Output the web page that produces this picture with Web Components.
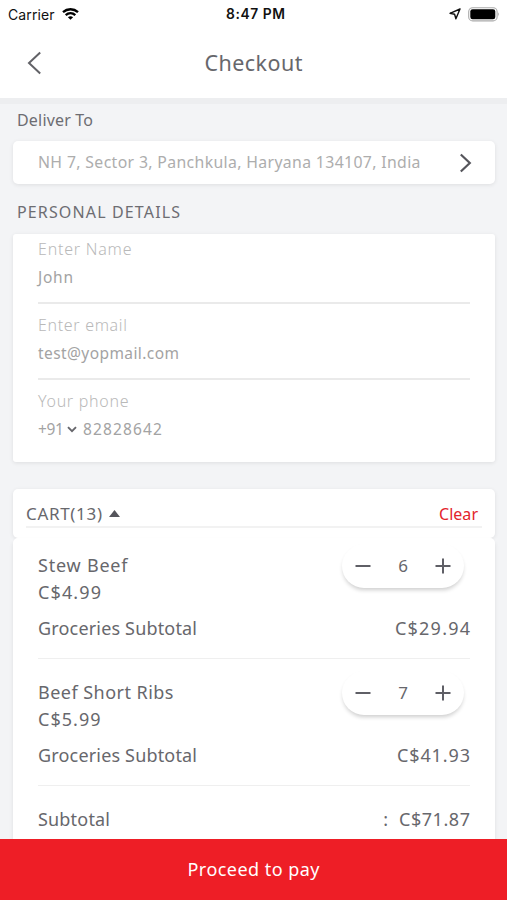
<!DOCTYPE html>
<html lang="en">
<head>
<meta charset="utf-8">
<meta name="viewport" content="width=device-width, initial-scale=1">
<title>Checkout</title>
<style>
html,body{margin:0;height:100%}
body{font-family:"Noto Sans","Open Sans",sans-serif;color:#67676c;background:#f3f4f6;overflow:hidden}
</style>
</head>
<body>
<checkout-page></checkout-page>
<script>
const define = (name, html, setup) => {
  const t = document.createElement('template');
  t.innerHTML = html;
  customElements.define(name, class extends HTMLElement {
    constructor() {
      super();
      this.attachShadow({ mode: 'open' }).append(t.content.cloneNode(true));
    }
    connectedCallback() { if (setup) setup(this, this.shadowRoot); }
  });
};

/* One line of text, tracked so that it spans the width given in "w". */
define('track-text', `<style>
:host{display:block;flex:none;white-space:pre;font-size:var(--fs,18px)}
span{display:inline-block;line-height:inherit}
</style><span></span>`, (el, root) => {
  const s = root.querySelector('span');
  s.textContent = el.getAttribute('text');
  const w = parseFloat(el.getAttribute('w'));
  const n = s.textContent.length;
  if (w && n > 1) {
    const gap = (w - s.getBoundingClientRect().width) / (n - 1);
    s.style.letterSpacing = gap.toFixed(3) + 'px';
    s.style.marginRight = (-gap).toFixed(3) + 'px';
  }
});

define('status-bar', `<style>
:host{display:grid;grid-template-columns:1fr auto 1fr;align-items:center;height:28px;box-sizing:border-box;padding:0 7px 0 8px;color:#111;font-family:Inter,"Liberation Sans",sans-serif}
.l,.r{display:flex;align-items:center}.l{gap:7px}.r{justify-content:flex-end;gap:7px}
track-text{--fs:14px;line-height:27px}.t{font-weight:600;--fs:13.8px;margin-left:3px}
svg{display:block}
</style>
<div class="l"><track-text text="Carrier" w="46.5"></track-text>
<svg width="17" height="12" viewBox="0 0 17 12" fill="none" stroke="#000" stroke-width="2.4"><path d="M1 4.1C5.3.3 11.7.3 16 4.1"/><path d="M3.7 7.1C6.5 4.7 10.5 4.7 13.3 7.1"/><path d="M8.5 11.8 5.9 9.2C7.4 8 9.6 8 11.1 9.2Z" fill="#000" stroke="none"/></svg></div>
<track-text class="t" text="8:47 PM" w="59"></track-text>
<div class="r"><svg width="12" height="12" viewBox="0 0 12 12" fill="none" stroke="#111" stroke-width="1.4" stroke-linejoin="round"><path d="M11 1 1 5.3 5.6 6.3 6.9 10.8Z"/></svg>
<svg width="32" height="15" viewBox="0 0 32 15"><rect x=".7" y=".7" width="28.4" height="13.2" rx="4" fill="#fff" stroke="#aaa" stroke-width="1.1"/><rect x="2.3" y="2.3" width="25" height="10" rx="2.3" fill="#000"/><path d="M30.2 5.2Q32 7.3 30.2 9.4Z" fill="#999"/></svg></div>`);

define('page-header', `<style>
:host{display:grid;grid-template-columns:1fr auto 1fr;align-items:center;height:69px;padding:0 27px}
track-text{--fs:21.5px;line-height:70px}
svg{display:block}
</style>
<svg width="16" height="24" viewBox="0 0 16 24" fill="none" stroke="#626267" stroke-width="2"><path d="M13.2 1.5 2 12 13.2 22.5"/></svg>
<track-text text="Checkout" w="98"></track-text><span></span>`);

define('section-title', `<style>
:host{display:flex;align-items:flex-start;padding:0 17px;line-height:22px;--fs:16px;color:#6d6d72}
</style><slot></slot>`);

define('panel-card', `<style>
:host{display:block;box-sizing:border-box;margin:0 12px 0 13px;background:#fff;border-radius:5px;box-shadow:0 1px 4px rgba(0,0,0,.09)}
</style><slot></slot>`);

define('address-row', `<style>
:host{display:flex;align-items:center;justify-content:space-between;height:43px;padding:0 23px 0 25px;line-height:41px;--fs:15.8px;color:#adadad}
svg{display:block}
</style><track-text text="NH 7, Sector 3, Panchkula, Haryana 134107, India" w="382.5"></track-text>
<svg width="13" height="20" viewBox="0 0 13 20" fill="none" stroke="#55555b" stroke-width="2.2"><path d="M1.8 1.5 10.8 10 1.8 18.5"/></svg>`);

define('form-field', `<style>
:host{display:flex;flex-direction:column;height:76px;box-sizing:border-box;margin:0 25px;border-bottom:2px solid #eaeaea;line-height:28px;--fs:16px}
:host([last]){border:0}
.label{color:#b9b9b9;font-weight:300}
.value{display:flex;align-items:center;color:#a3a3a3;--fs:15.5px;line-height:29px}
</style><div class="label"><slot name="label"></slot></div><div class="value"><slot></slot></div>`);

define('cart-head', `<style>
:host{display:flex;align-items:center;height:49px;box-sizing:border-box;padding:0 17px 0 13px;line-height:46px;--fs:17px;background:linear-gradient(#f2f2f2,#f2f2f2) 13px 37px/calc(100% - 26px) 2px no-repeat}
.c{color:#e3242b;margin-left:auto;--fs:16px}
svg{display:block;margin:0 0 1px 7px}
</style><track-text text="CART(13)" w="76"></track-text>
<svg width="11" height="7" viewBox="0 0 11 7"><path d="M5.5 0 11 7H0Z" fill="#55555b"/></svg>
<track-text class="c" text="Clear" w="39"></track-text>`);

define('qty-stepper', `<style>
:host{display:flex;justify-content:space-between;align-items:center;width:122px;height:44px;box-sizing:border-box;padding:0 13px;border-radius:22px;background:#fff;box-shadow:0 3px 4px -1px rgba(0,0,0,.2);line-height:42px;--fs:17px}
svg{display:block}
</style>
<svg width="16" height="16" viewBox="0 0 16 16" stroke="#5f5f66" stroke-width="2"><path d="M.5 8H15.5"/></svg>
<slot></slot>
<svg width="16" height="16" viewBox="0 0 16 16" stroke="#5f5f66" stroke-width="2"><path d="M.5 8H15.5M8 .5V15.5"/></svg>`);

define('cart-item', `<style>
:host{display:block;height:127px;box-sizing:border-box;margin:0 25px;border-bottom:1px solid #efefef;padding-top:20px}
:host([first]){height:121px;padding-top:14px}
.top{display:flex;justify-content:space-between;height:53px}
.name{line-height:27px}
qty-stepper{margin:-8px 6px 0 0}
.sum{display:flex;justify-content:space-between;line-height:46px}
</style>
<div class="top"><div class="name"><slot name="name"></slot><slot name="price"></slot></div><qty-stepper><slot name="qty"></slot></qty-stepper></div>
<div class="sum"><track-text text="Groceries Subtotal" w="159"></track-text><slot name="sum"></slot></div>`);

define('total-row', `<style>
:host{display:flex;align-items:center;gap:11px;margin:0 25px;height:66px;line-height:66px}
.a{margin-right:auto}
</style><track-text class="a" text="Subtotal" w="72"></track-text><track-text text=":"></track-text><track-text text="C$71.87" w="71"></track-text>`);

define('pay-bar', `<style>
:host{display:flex;justify-content:center;height:61px;background:#ee1e26;color:#fff;line-height:60px;--fs:18px}
</style><slot></slot>`);

define('checkout-page', `<style>
:host{display:flex;flex-direction:column;height:900px;overflow:hidden}
.top{background:#fff;height:98px;flex:none}
main{flex:1;min-height:0;overflow:hidden;box-shadow:inset 0 6px 0 #edeef0}
.t1{padding-top:11px;height:32px}.t2{height:33px;padding-top:17px}
.form{height:228px;padding-top:1px;border-radius:3px;margin-bottom:27px}
.body{height:340px;border-radius:5px 5px 0 0;box-shadow:0 3px 4px rgba(0,0,0,.09)}
pay-bar{flex:none}
svg{display:block;margin:0 6px 0 3px}
</style>
<div class="top"><status-bar></status-bar><page-header></page-header></div>
<main>
<section-title class="t1"><track-text text="Deliver To" w="76"></track-text></section-title>
<panel-card><address-row></address-row></panel-card>
<section-title class="t2"><track-text text="PERSONAL DETAILS" w="163"></track-text></section-title>
<panel-card class="form">
<form-field style="height:69px"><track-text slot="label" text="Enter Name" w="93.5"></track-text><track-text text="John" w="35"></track-text></form-field>
<form-field style="padding-top:7px"><track-text slot="label" text="Enter email" w="89"></track-text><track-text text="test@yopmail.com" w="141"></track-text></form-field>
<form-field last style="padding-top:7px"><track-text slot="label" text="Your phone" w="90.5"></track-text><track-text text="+91" w="26"></track-text><svg width="10" height="7" viewBox="0 0 10 7" fill="none" stroke="#66666b" stroke-width="1.9"><path d="M1 1.2 5 5.2 9 1.2"/></svg><track-text text="82828642" w="79"></track-text></form-field>
</panel-card>
<panel-card><cart-head></cart-head></panel-card>
<panel-card class="body">
<cart-item first><track-text slot="name" text="Stew Beef" w="89.5"></track-text><track-text slot="price" text="C$4.99" w="63"></track-text><track-text slot="qty" text="6"></track-text><track-text slot="sum" text="C$29.94" w="75"></track-text></cart-item>
<cart-item><track-text slot="name" text="Beef Short Ribs" w="135.5"></track-text><track-text slot="price" text="C$5.99" w="62.5"></track-text><track-text slot="qty" text="7"></track-text><track-text slot="sum" text="C$41.93" w="73"></track-text></cart-item>
<total-row></total-row>
</panel-card>
</main>
<pay-bar><track-text text="Proceed to pay" w="132"></track-text></pay-bar>`);
</script>
</body>
</html>
